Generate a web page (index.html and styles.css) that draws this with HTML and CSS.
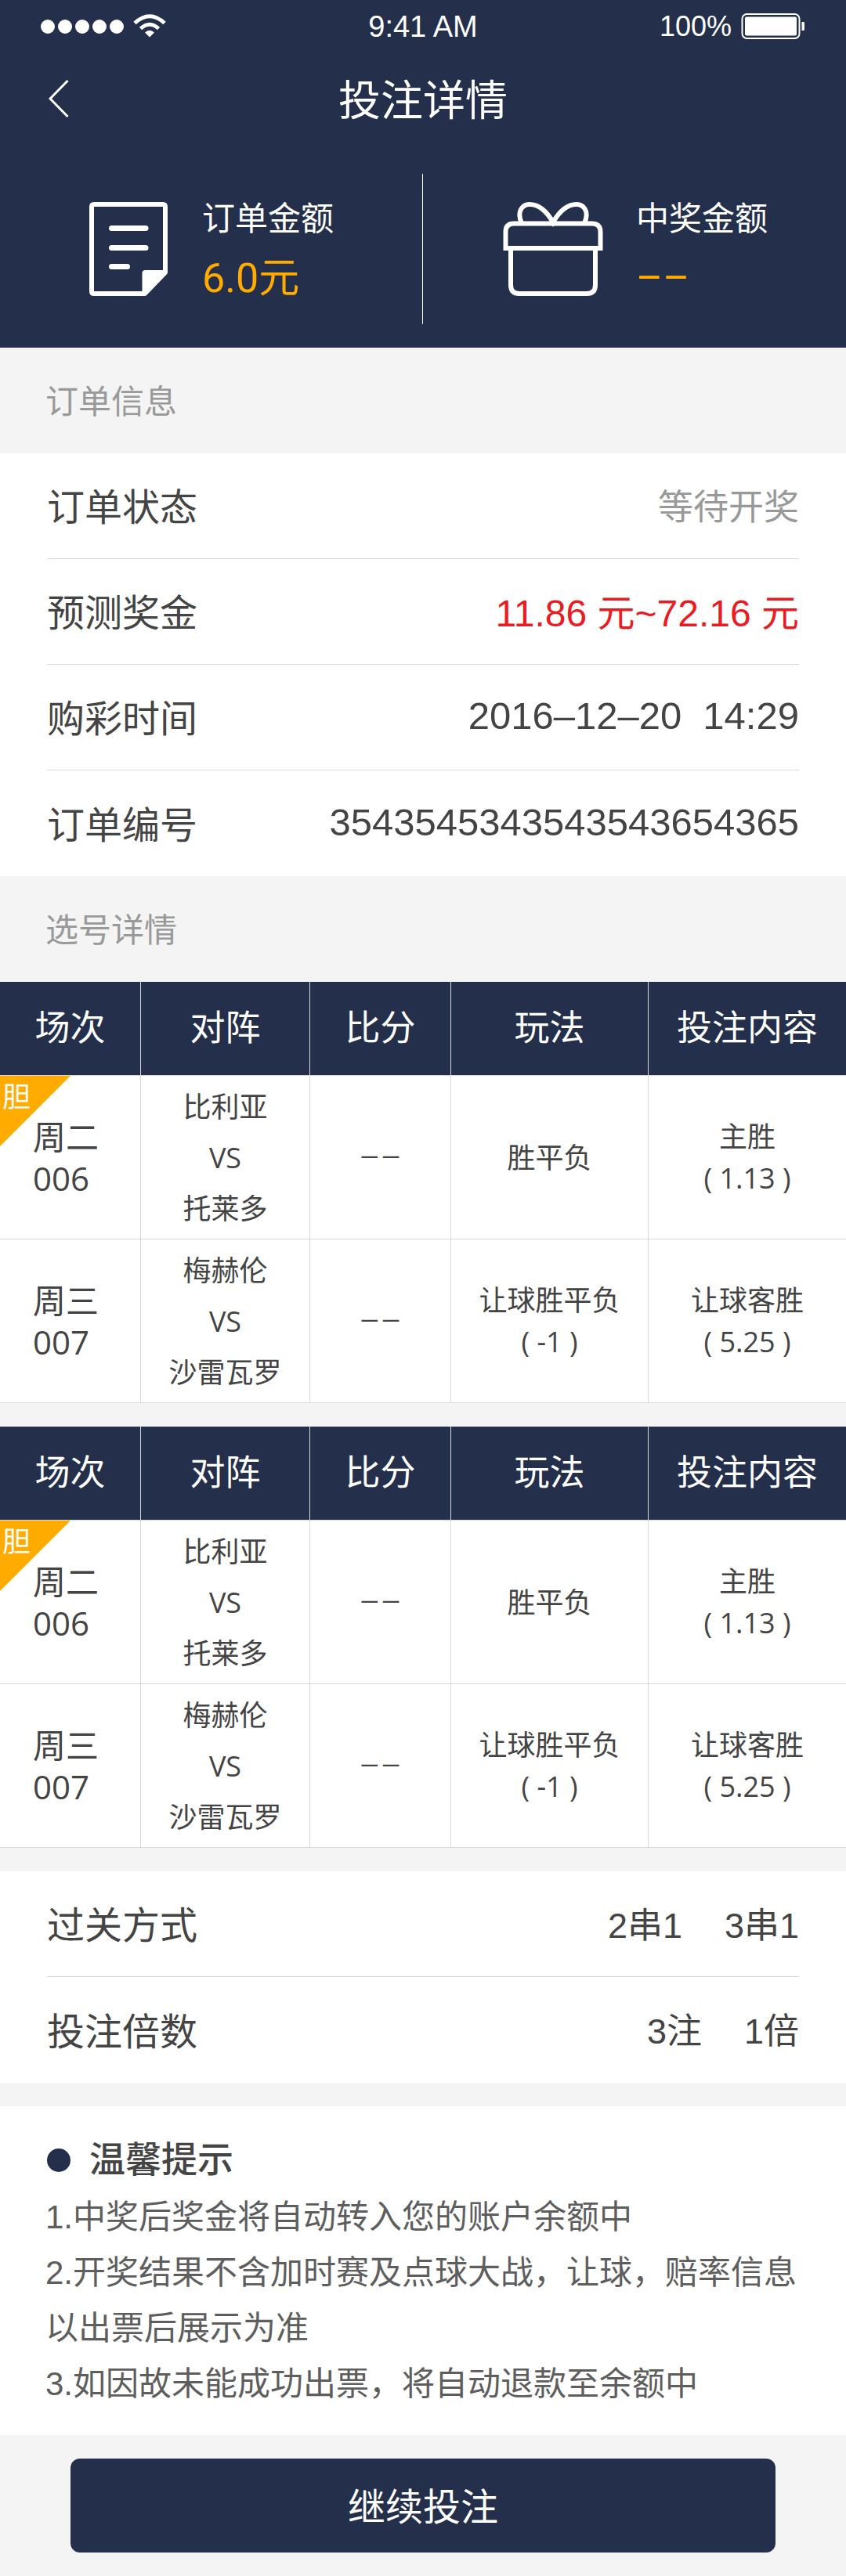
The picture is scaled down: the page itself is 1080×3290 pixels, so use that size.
FILE: index.html
```html
<!DOCTYPE html>
<html lang="zh-CN">
<head>
<meta charset="utf-8">
<meta name="viewport" content="width=device-width, initial-scale=1">
<title>投注详情</title>
<link rel="stylesheet" href="styles.css">
</head>
<body>
<header class="top">
  <div class="status">
    <div class="status-side">
      <svg class="signal" viewBox="0 0 160 40" aria-hidden="true">
        <g fill="#fff"><circle cx="9" cy="20" r="9"/><circle cx="31" cy="20" r="9"/><circle cx="53" cy="20" r="9"/><circle cx="75" cy="20" r="9"/><circle cx="97" cy="20" r="9"/><path d="M139 33.500 L133 27.500 Q139 22 145 27.500 Z"/></g>
        <g fill="none" stroke="#fff" stroke-width="5"><path d="M120 15.500 Q139 -2 158 15.500"/><path d="M127.500 22.500 Q139 12 150.500 22.500"/></g>
      </svg>
    </div>
    <div class="clock">9:41 AM</div>
    <div class="status-side status-end">
      <span class="charge">100%</span>
      <svg class="battery" viewBox="0 0 82 36" aria-hidden="true">
        <rect x="1.500" y="2" width="73" height="31" rx="6" fill="none" stroke="#fff" stroke-width="2"/>
        <rect x="5" y="5.500" width="66" height="24" rx="2" fill="#fff"/>
        <path d="M77.500 12 H80 Q81 12 81 14 V21 Q81 23 80 23 H77.500 Z" fill="#fff"/>
      </svg>
    </div>
  </div>
  <nav class="bar">
    <a class="back" href="#" aria-label="返回"><svg viewBox="0 0 26 50" aria-hidden="true"><path d="M24.500 2 L2 25 L24.500 48" fill="none" stroke="#fff" stroke-width="3"/></svg></a>
    <h1 class="title">投注详情</h1>
  </nav>
  <div class="summary">
    <div class="sum sum-order">
      <svg class="doc" viewBox="0 0 100 120" aria-hidden="true">
        <path d="M6 3 H94 Q97 3 97 6 V90 L71 117 H6 Q3 117 3 114 V6 Q3 3 6 3 Z" fill="none" stroke="#fff" stroke-width="6" stroke-linejoin="round"/>
        <path d="M67.500 119 V91 Q67.500 87 71.500 87 H99 V91 L73 118 Z" fill="#fff"/>
        <path d="M28.500 33.500 H72 M28.500 58.500 H72 M28.500 82.500 H48.500" stroke="#fff" stroke-width="7" stroke-linecap="round"/>
      </svg>
      <div class="sum-text"><div class="sum-label">订单金额</div><div class="sum-value">6.0元</div></div>
    </div>
    <div class="sum sum-prize">
      <svg class="gift" viewBox="0 0 128 120" aria-hidden="true">
        <g fill="none" stroke="#fff" stroke-width="6">
          <path d="M3.500 62 V38 Q3.500 27.500 14 27.500 H114 Q124.500 27.500 124.500 38 V62 M3.500 59 H124.500"/>
          <path d="M10 61 V106 Q10 117 21 117 H107 Q118 117 118 106 V61"/>
          <path d="M24 27 C17 12 25 3 34 3 C46 3 56 12 64 26 C72 12 82 3 94 3 C103 3 111 12 104 27"/>
        </g>
      </svg>
      <div class="sum-text"><div class="sum-label">中奖金额</div><div class="sum-value">––</div></div>
    </div>
  </div>
</header>
<main>
  <h2 class="section">订单信息</h2>
  <dl class="panel">
    <div class="row"><dt>订单状态</dt><dd class="muted">等待开奖</dd></div>
    <div class="row"><dt>预测奖金</dt><dd class="red">11.86 元~72.16 元</dd></div>
    <div class="row"><dt>购彩时间</dt><dd class="numeric">2016–12–20&nbsp; 14:29</dd></div>
    <div class="row"><dt>订单编号</dt><dd class="numeric">3543545343543543654365</dd></div>
  </dl>
  <h2 class="section">选号详情</h2>
  <table class="bets">
    <thead><tr><th class="c-no">场次</th><th class="c-vs">对阵</th><th class="c-score">比分</th><th>玩法</th><th>投注内容</th></tr></thead>
    <tbody>
      <tr><td class="no"><span class="banker">胆</span>周二<br>006</td><td class="teams">比利亚<br>VS<br>托莱多</td><td class="score">––</td><td>胜平负</td><td>主胜<br>( 1.13 )</td></tr>
      <tr><td class="no">周三<br>007</td><td class="teams">梅赫伦<br>VS<br>沙雷瓦罗</td><td class="score">––</td><td>让球胜平负<br>( -1 )</td><td>让球客胜<br>( 5.25 )</td></tr>
    </tbody>
  </table>
  <table class="bets">
    <thead><tr><th class="c-no">场次</th><th class="c-vs">对阵</th><th class="c-score">比分</th><th>玩法</th><th>投注内容</th></tr></thead>
    <tbody>
      <tr><td class="no"><span class="banker">胆</span>周二<br>006</td><td class="teams">比利亚<br>VS<br>托莱多</td><td class="score">––</td><td>胜平负</td><td>主胜<br>( 1.13 )</td></tr>
      <tr><td class="no">周三<br>007</td><td class="teams">梅赫伦<br>VS<br>沙雷瓦罗</td><td class="score">––</td><td>让球胜平负<br>( -1 )</td><td>让球客胜<br>( 5.25 )</td></tr>
    </tbody>
  </table>
  <dl class="panel">
    <div class="row"><dt>过关方式</dt><dd class="pair"><span>2串1</span><span>3串1</span></dd></div>
    <div class="row"><dt>投注倍数</dt><dd class="pair"><span>3注</span><span>1倍</span></dd></div>
  </dl>
  <section class="tips">
    <h2 class="tips-title">温馨提示</h2>
    <p>1.中奖后奖金将自动转入您的账户余额中</p>
    <p>2.开奖结果不含加时赛及点球大战，让球，赔率信息以出票后展示为准</p>
    <p>3.如因故未能成功出票，将自动退款至余额中</p>
  </section>
</main>
<footer class="actions"><button class="submit" type="button">继续投注</button></footer>
</body>
</html>
```
FILE: styles.css
```css
:root {
  --navy: #24304b;
  --amber: #ffab00;
  --ink: #444;
  --line: #d9d9d9;
  --ground: #f4f4f4;
}
* { box-sizing: border-box; }
body {
  margin: 0;
  background: var(--ground);
  color: var(--ink);
  font-family: "Liberation Sans", "Noto Sans CJK SC", sans-serif;
  font-weight: 400;
}
h1, h2, p, dl, dd { margin: 0; }

.top { background: var(--navy); color: #fff; }
.status {
  display: grid;
  grid-template-columns: 1fr auto 1fr;
  align-items: center;
  height: 68px;
  padding: 0 52px;
}
.status-side { display: flex; align-items: center; gap: 12px; }
.status-end { justify-content: flex-end; }
.signal { width: 160px; height: 40px; }
.clock { font-size: 38px; }
.charge { font-size: 36px; }
.battery { width: 82px; height: 36px; }

.bar {
  display: grid;
  grid-template-columns: 1fr auto 1fr;
  align-items: center;
  height: 116px;
  padding: 0 62px;
}
.back { display: flex; }
.back svg { width: 26px; height: 50px; }
.title { padding-top: 6px; font-size: 54px; font-weight: 400; line-height: 72px; }

.summary { display: grid; grid-template-columns: 1fr 1fr; height: 260px; padding: 38px 0 30px; }
.sum { display: flex; align-items: center; gap: 44px; }
.sum-order { padding-left: 114px; border-right: 1px solid #fff; }
.sum-prize { padding-left: 102px; gap: 42px; }
.doc { width: 100px; height: 120px; }
.gift { width: 128px; height: 120px; }
.sum-label { font-size: 42px; line-height: 76px; }
.sum-value {
  color: var(--amber);
  font-family: Roboto, "Noto Sans CJK SC", sans-serif;
  font-size: 52px;
  line-height: 76px;
}

.section {
  padding: 4px 58px 0;
  color: #999;
  font-size: 42px;
  font-weight: 400;
  line-height: 131px;
}
.panel { padding: 0 60px; background: #fff; }
.row {
  display: flex;
  align-items: center;
  justify-content: space-between;
  height: 135px;
  padding-bottom: 4px;
  border-bottom: 1px solid var(--line);
  font-size: 48px;
}
.row:last-child { border-bottom: 0; }
.row .muted { color: #999; font-size: 45px; }
.row .red { color: #e91c24; }
.row .numeric { font-size: 49px; }
.row .pair { display: flex; gap: 54px; font-size: 45px; }

.bets {
  width: 100%;
  margin-bottom: 30px;
  border-spacing: 0;
  table-layout: fixed;
  background: #fff;
  font-family: "Open Sans", "Noto Sans CJK SC", sans-serif;
  font-size: 36px;
  line-height: 53px;
  text-align: center;
}
.bets th, .bets td { padding: 0; border: solid var(--line); border-width: 0 1px 1px 0; }
.bets th:last-child, .bets td:last-child { border-right: 0; }
.bets th { height: 120px; padding-bottom: 4px; background: var(--navy); color: #fff; font-size: 45px; font-weight: 400; }
.bets td { height: 209px; }
.c-no, .c-score { width: 16.667%; }
.c-vs { width: 20%; }
.bets .no { position: relative; padding-left: 42px; font-size: 42px; text-align: left; }
.bets .teams { line-height: 65px; }
.bets .score { font-family: Roboto, sans-serif; font-size: 42px; font-weight: 300; }
.banker {
  position: absolute;
  top: 0;
  left: 0;
  width: 90px;
  height: 90px;
  padding-left: 3px;
  background: var(--amber);
  clip-path: polygon(0 0, 100% 0, 0 100%);
  color: #fff;
  font-size: 36px;
}

.tips {
  padding: 31px 58px 30px;
  margin-top: 30px;
  background: #fff;
  color: #5e5e5e;
  font-size: 42px;
  line-height: 71px;
}
.tips-title {
  display: flex;
  align-items: center;
  gap: 24px;
  padding-left: 2px;
  color: var(--ink);
  font-size: 46px;
  font-weight: 500;
  line-height: 75px;
}
.tips-title::before { content: ""; width: 30px; height: 30px; border-radius: 50%; background: var(--navy); }

.actions { padding: 30px 90px; }
.submit {
  display: block;
  width: 100%;
  height: 120px;
  padding: 0 0 4px;
  border: 0;
  border-radius: 12px;
  background: var(--navy);
  color: #fff;
  font: inherit;
  font-size: 48px;
}
```
